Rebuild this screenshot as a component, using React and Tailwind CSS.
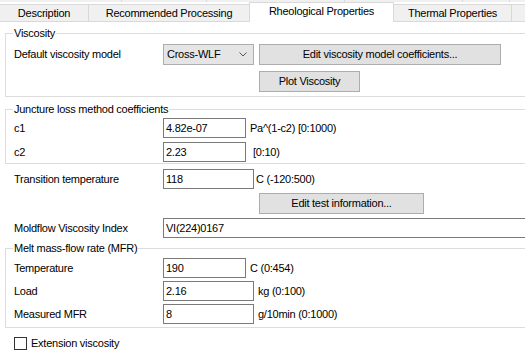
import React from 'react';

const Group = ({ title, className = '', children }) => (
  <div className={`w-[540px] border border-[#dcdcdc] ${className}`}>
    <div className="-mt-[7px] ml-[7px] w-fit bg-white px-[1px] h-[13px] leading-[13px]">{title}</div>
    <div className="pl-[8px]">{children}</div>
  </div>
);

const Input = ({ value, w = 'w-[83px]' }) => (
  <div className={`${w} h-[20px] border border-[#7a7a7a] bg-white pl-[2px] leading-[18px] shrink-0`}>{value}</div>
);

const Row = ({ label, children, className = '' }) => (
  <div className={`flex items-center ${className}`}>
    <div className="w-[149px] shrink-0">{label}</div>
    {children}
  </div>
);

const Btn = ({ children, className = '' }) => (
  <div className={`h-[21px] border border-[#adadad] bg-[#e1e1e1] flex items-center justify-center leading-[13px] ${className}`}>
    {children}
  </div>
);

export default function App() {
  const topRow = [122, 85, 138, 118, 47, 40];
  return (
    <div className="w-[525px] h-[362px] overflow-hidden bg-white text-[11px] tracking-[-0.25px] text-black font-['Liberation_Sans',Arial,sans-serif] leading-[13px]">
      {/* Tabs */}
      <div className="flex h-[2px]">
        {topRow.map((w, i) => (
          <div key={i} style={{ width: w }} className="h-[2px] bg-[#f0f0f0] border-r border-[#d9d9d9] shrink-0" />
        ))}
      </div>
      <div className="flex mt-[2px] h-[18px]">
        <div className="w-[88px] shrink-0 h-[18px] bg-[#f0f0f0] border-t border-b border-[#d9d9d9] text-center pt-[2px]">Description</div>
        <div className="w-[161px] shrink-0 h-[18px] bg-[#f0f0f0] border-t border-b border-l border-[#d9d9d9] text-center pt-[2px]">Recommended Processing</div>
        <div className="w-[145px] shrink-0 -mt-[2px] h-[20px] bg-white border-t border-l border-r border-[#d9d9d9] text-center pt-[2px] relative z-10">Rheological Properties</div>
        <div className="w-[118px] shrink-0 h-[18px] bg-[#f0f0f0] border-t border-b border-r border-[#d9d9d9] text-center pt-[2px]">Thermal Properties</div>
        <div className="w-[40px] shrink-0 h-[18px] bg-[#f0f0f0] border-t border-b border-[#d9d9d9]" />
      </div>

      {/* Content */}
      <div className="pl-[5px]">
        <Group title="Viscosity" className="mt-[11px] h-[64px]">
          <Row label="Default viscosity model" className="mt-[4px]">
            <div className="w-[91px] h-[21px] border border-[#adadad] bg-[#e5e5e5] flex items-center justify-between pl-[3px] pr-[6px] shrink-0">
              <span>Cross-WLF</span>
              <svg width="8" height="5" viewBox="0 0 8 5" fill="none" stroke="#555" strokeWidth="1">
                <path d="M0.5 0.5 L4 4 L7.5 0.5" />
              </svg>
            </div>
            <Btn className="w-[242px] ml-[5px] shrink-0">Edit viscosity model coefficients...</Btn>
          </Row>
          <Btn className="w-[101px] ml-[245px] mt-[6px]">Plot Viscosity</Btn>
        </Group>

        <Group title="Juncture loss method coefficients" className="mt-[12px] h-[55px]">
          <Row label="c1" className="mt-[2px]">
            <Input value="4.82e-07" />
            <span className="ml-[4px]">Pa^(1-c2) [0:1000)</span>
          </Row>
          <Row label="c2" className="mt-[4px]">
            <Input value="2.23" />
            <span className="ml-[7px]">[0:10)</span>
          </Row>
        </Group>

        <div className="pl-[9px]">
          <Row label="Transition temperature" className="mt-[5px]">
            <Input value="118" w="w-[91px]" />
            <span className="ml-[2px]">C (-120:500)</span>
          </Row>
          <Btn className="w-[165px] ml-[245px] mt-[4px]">Edit test information...</Btn>
          <Row label="Moldflow Viscosity Index" className="mt-[4px]">
            <Input value="VI(224)0167" w="w-[380px]" />
          </Row>
        </div>

        <Group title="Melt mass-flow rate (MFR)" className="mt-[10px] h-[80px]">
          <Row label="Temperature" className="mt-[3px]">
            <Input value="190" />
            <span className="ml-[4px]">C (0:454)</span>
          </Row>
          <Row label="Load" className="mt-[3px]">
            <Input value="2.16" w="w-[91px]" />
            <span className="ml-[4px]">kg (0:100)</span>
          </Row>
          <Row label="Measured MFR" className="mt-[3px]">
            <Input value="8" w="w-[91px]" />
            <span className="ml-[4px]">g/10min (0:1000)</span>
          </Row>
        </Group>

        <div className="flex items-center ml-[9px] mt-[9px]">
          <div className="w-[13px] h-[13px] border border-[#333] bg-white shrink-0" />
          <span className="ml-[4px]">Extension viscosity</span>
        </div>
      </div>
    </div>
  );
}
